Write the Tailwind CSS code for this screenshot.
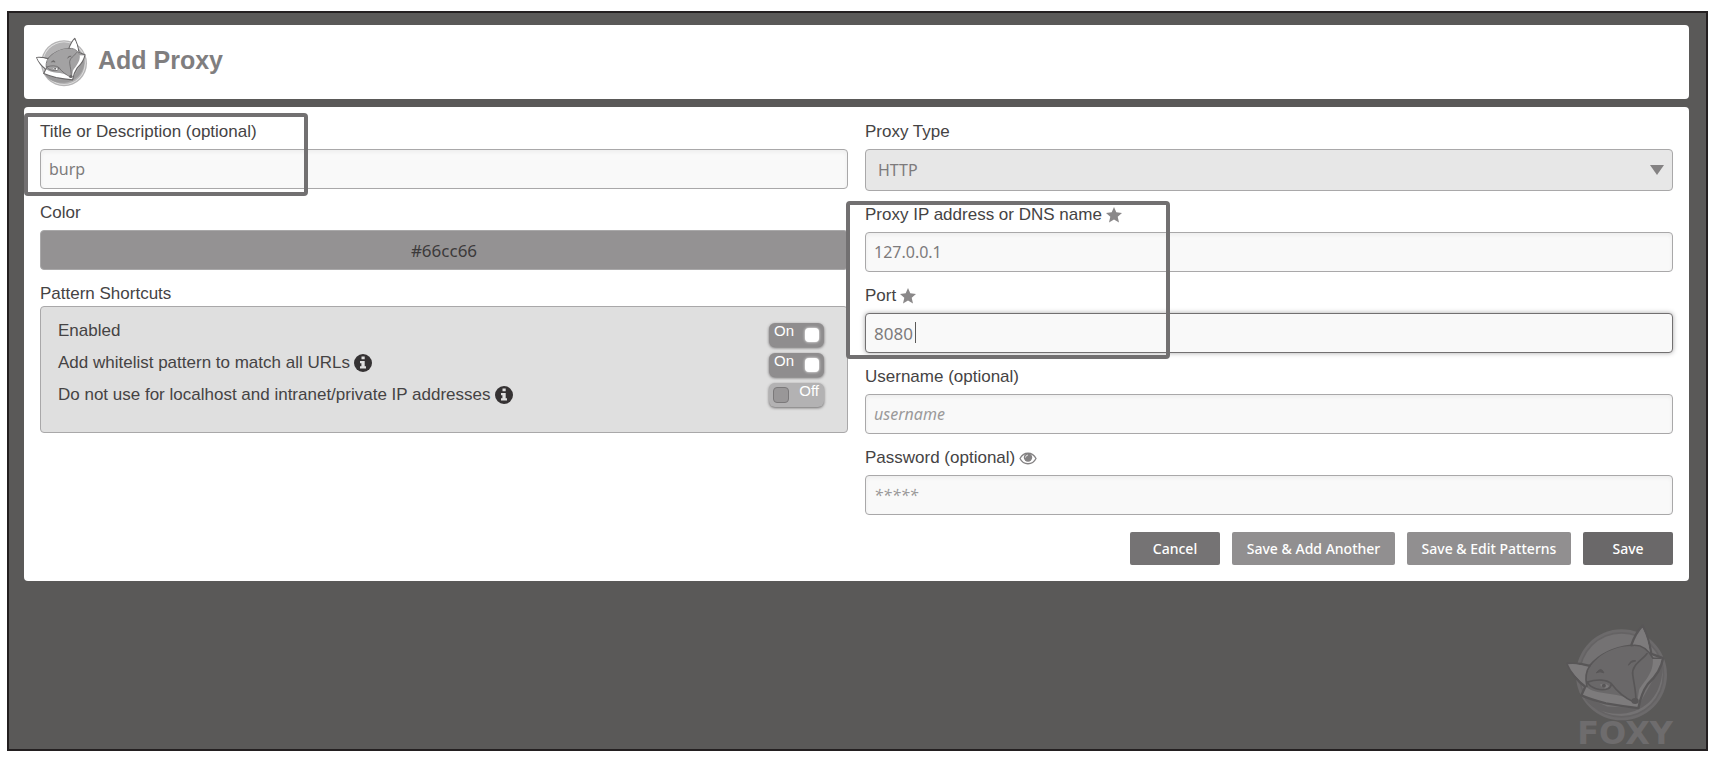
<!DOCTYPE html>
<html lang="en">
<head>
    <meta charset="UTF-8">
    <meta name="viewport" content="width=device-width, initial-scale=1.0">
    <title>Add Proxy</title>
    <script src="https://cdn.jsdelivr.net/npm/@tailwindcss/browser@4"></script>
</head>
<body class="flex flex-col min-h-screen bg-white px-[7px] pt-[11px] pb-2 font-['Liberation_Sans',sans-serif] text-[17px] text-[#454344]">
    <!-- Shared fox logo, coloured through custom properties -->
    <svg class="hidden">
        <symbol id="fox" viewBox="76 48 310 290">
            <circle cx="243" cy="200" r="137" fill="var(--ring)"></circle>
            <circle cx="243" cy="200" r="129" fill="var(--rim)"></circle>
            <circle cx="243" cy="200" r="124" fill="var(--disc)"></circle>
            <path d="M128 264 C160 330 300 345 350 250 C372 205 366 170 360 150 L352 190 L290 300 L200 295 Z" fill="var(--shade)"></path>
            <path d="M80 166 Q115 164 148 173 Q190 122 272 112 Q286 72 307 52 Q326 92 333 137 L368 150 Q362 190 322 228 Q302 256 294 300 Q240 294 196 286 Q150 274 122 262 L134 236 Q98 210 80 166 Z" fill="var(--white)" stroke="var(--line)" stroke-width="7" stroke-linejoin="round"></path>
            <path d="M138 208 C142 160 205 112 275 113 Q312 110 337 150 C342 195 308 222 296 245 L290 284 L272 277 C235 250 160 262 138 236 Z" fill="var(--fur)"></path>
            <path d="M284 112 Q290 80 306 58 Q324 92 328 134 Q308 112 284 112 Z" fill="var(--white)"></path>
            <path d="M82 168 Q112 164 138 178 Q130 205 136 230 Q96 202 82 168 Z" fill="var(--white)"></path>
            <path d="M140 222 C170 212 198 214 212 226 C230 250 258 272 280 282 M140 222 C150 240 180 250 202 242 Q212 238 212 226 M320 136 C308 154 272 170 277 200 C280 226 288 252 286 280 M148 173 Q130 198 139 235 M272 112 Q312 105 338 150 L360 150" fill="none" stroke="var(--line)" stroke-width="5" stroke-linecap="round"></path>
            <path d="M167 194 Q182 174 190 194 Q178 188 167 194 Z M264 171 Q270 154 286 158 Q272 160 264 171 Z" fill="var(--line)" stroke="var(--line)" stroke-width="3"></path>
            <path d="M178 230 Q192 222 206 234 Q194 250 178 230 Z" fill="var(--white)"></path>
            <circle cx="190" cy="233" r="6" fill="var(--line)"></circle>
            <ellipse cx="284" cy="279" rx="11" ry="9" fill="var(--line)"></ellipse>
        </symbol>
    </svg>

    <main class="flex-1 flex flex-col border-2 border-[#231f20] bg-[#5a5958] pl-[15px] pr-[17px] pt-3">
        <header class="flex items-center gap-[10px] h-[74px] bg-white rounded px-3">
            <svg class="w-[52px] h-[50px] [--ring:#b5b4b5] [--rim:#e4e4e4] [--line:#6a6869] [--disc:#b4b3b4] [--shade:#9b9a9b] [--white:#ffffff] [--fur:#a3a2a3]"><use href="#fox"></use></svg>
            <h1 class="text-[25px] font-bold text-[#807e7f] pb-[2px]">Add Proxy</h1>
        </header>

        <form class="mt-2 bg-white rounded px-4 pt-[13px] pb-4">
            <div class="grid grid-cols-2 gap-[17px]">
                <!-- Left column -->
                <div class="flex flex-col gap-3">
                    <div class="relative">
                        <label for="title" class="block leading-6 mb-[5px]">Title or Description (optional)</label>
                        <input type="text" id="title" value="burp" class="block w-full h-10 px-2 rounded border border-[#a9a8a9] bg-[#f9f9f9] inset-shadow-sm font-['Noto_Sans',sans-serif] text-base text-[#7d7b7c] focus:outline-none">
                        <div class="absolute -left-4 -top-[7px] w-[284px] h-[83px] border-4 border-[#727071] rounded pointer-events-none"></div>
                    </div>
                    <div>
                        <label for="color" class="block leading-6 mb-[5px]">Color</label>
                        <input type="text" id="color" value="#66cc66" class="block w-full h-10 px-2 rounded border border-[#a9a8a9] bg-[#949293] text-center font-['Noto_Sans',sans-serif] text-[17px] text-[#3c3a3b]">
                    </div>
                    <div>
                        <h2 class="leading-6">Pattern Shortcuts</h2>
                        <div class="flex justify-between h-[127px] rounded border border-[#a9a8a9] bg-[#dfdfdf] pl-[17px] pr-[23px]">
                            <div class="flex flex-col pt-2">
                                <label for="enabled" class="leading-8">Enabled</label>
                                <label for="whitelist" class="flex items-center gap-1 leading-8">
                                    Add whitelist pattern to match all URLs
                                    <svg class="w-[18px] h-[18px]" viewBox="0 0 18 18"><circle cx="9" cy="9" r="9" fill="#353233"></circle><path d="M7.5 2.5h3.2v2.8H7.5zM6 7h4.7v5.2H12v2.3H6v-2.3h1.4V9.2H6z" fill="#dfdfdf"></path></svg>
                                </label>
                                <label for="blacklist" class="flex items-center gap-1 leading-8">
                                    Do not use for localhost and intranet/private IP addresses
                                    <svg class="w-[18px] h-[18px]" viewBox="0 0 18 18"><circle cx="9" cy="9" r="9" fill="#353233"></circle><path d="M7.5 2.5h3.2v2.8H7.5zM6 7h4.7v5.2H12v2.3H6v-2.3h1.4V9.2H6z" fill="#dfdfdf"></path></svg>
                                </label>
                            </div>
                            <div class="flex flex-col gap-[6px] pt-4 text-[15px] leading-4 text-white">
                                <div class="relative h-6">
                                    <input type="checkbox" id="enabled" checked class="block appearance-none w-[55px] h-6 rounded-md bg-[#b3b2b3] checked:bg-[#8f8d8e] shadow-[0_1px_3px_#6b696a]">
                                    <span class="absolute left-[5px] top-0 pointer-events-none">On</span>
                                    <span class="absolute right-[5px] top-[5px] size-[14px] rounded bg-white shadow-[0_0_3px_#ffffff] pointer-events-none"></span>
                                </div>
                                <div class="relative h-6">
                                    <input type="checkbox" id="whitelist" checked class="block appearance-none w-[55px] h-6 rounded-md bg-[#b3b2b3] checked:bg-[#8f8d8e] shadow-[0_1px_3px_#6b696a]">
                                    <span class="absolute left-[5px] top-0 pointer-events-none">On</span>
                                    <span class="absolute right-[5px] top-[5px] size-[14px] rounded bg-white shadow-[0_0_3px_#ffffff] pointer-events-none"></span>
                                </div>
                                <div class="relative h-6">
                                    <input type="checkbox" id="blacklist" class="block appearance-none w-[55px] h-6 rounded-md bg-[#b3b2b3] checked:bg-[#8f8d8e] shadow-[0_1px_3px_#6b696a]">
                                    <span class="absolute right-[5px] top-0 pointer-events-none">Off</span>
                                    <span class="absolute left-1 top-1 size-4 rounded border border-[#7b797a] bg-[#999798] pointer-events-none"></span>
                                </div>
                            </div>
                        </div>
                    </div>
                </div>

                <!-- Right column -->
                <div class="flex flex-col gap-3">
                    <div>
                        <label for="type" class="block leading-6 mb-[5px]">Proxy Type</label>
                        <div class="relative">
                            <select id="type" class="block appearance-none w-full h-[42px] px-3 rounded border border-[#a9a8a9] bg-[#e7e7e7] font-['Noto_Sans',sans-serif] text-base text-[#7d7b7c]">
                                <option>HTTP</option>
                            </select>
                            <svg class="absolute right-[9px] top-4 w-[14px] h-[10px] pointer-events-none" viewBox="0 0 14 10"><path d="M0 0h14L7 10z" fill="#848283"></path></svg>
                        </div>
                    </div>
                    <div class="relative flex flex-col gap-3">
                        <div>
                            <label for="address" class="flex items-center gap-1 leading-6 mb-[5px]">
                                Proxy IP address or DNS name
                                <svg class="w-4 h-4" viewBox="0 0 16 16"><path d="M8 0l2.3 5.3 5.7.6-4.3 3.8 1.3 5.8L8 12.5 3 15.5l1.3-5.8L0 5.9l5.7-.6z" fill="#8a8889"></path></svg>
                            </label>
                            <input type="text" id="address" value="127.0.0.1" class="block w-full h-10 px-2 rounded border border-[#a9a8a9] bg-[#f9f9f9] inset-shadow-sm font-['Noto_Sans',sans-serif] text-base text-[#7d7b7c] focus:outline-none">
                        </div>
                        <div>
                            <label for="port" class="flex items-center gap-1 leading-6 mb-[5px]">
                                Port
                                <svg class="w-4 h-4" viewBox="0 0 16 16"><path d="M8 0l2.3 5.3 5.7.6-4.3 3.8 1.3 5.8L8 12.5 3 15.5l1.3-5.8L0 5.9l5.7-.6z" fill="#8a8889"></path></svg>
                            </label>
                            <div class="relative">
                                <input type="text" id="port" value="8080" class="block w-full h-10 px-2 rounded border border-[#727071] bg-[#f9f9f9] shadow-[0_0_5px_#a9a8a9] font-['Noto_Sans',sans-serif] text-[17px] text-[#7d7b7c] focus:outline-none">
                                <span class="absolute left-[50px] top-[9px] w-px h-[21px] bg-[#5a5958]"></span>
                            </div>
                        </div>
                        <div class="absolute -left-[19px] -top-[2px] w-[324px] h-[158px] border-4 border-[#727071] rounded pointer-events-none"></div>
                    </div>
                    <div>
                        <label for="username" class="block leading-6 mb-[5px]">Username (optional)</label>
                        <input type="text" id="username" placeholder="username" class="block w-full h-10 px-2 rounded border border-[#a9a8a9] bg-[#f9f9f9] inset-shadow-sm font-['Noto_Sans',sans-serif] text-base placeholder:italic placeholder:text-[#9b999a]">
                    </div>
                    <div>
                        <label for="password" class="flex items-center gap-1 leading-6 mb-[5px]">
                            Password (optional)
                            <svg class="w-[18px] h-[13px]" viewBox="0 0 18 13"><path d="M1 6.5C4.5-.5 13.5-.5 17 6.5 13.5 13.5 4.5 13.5 1 6.5z" fill="#ffffff" stroke="#848283" stroke-width="1.3"></path><circle cx="9" cy="5.5" r="4.2" fill="#848283"></circle><path d="M6.5 5.5Q6.7 3.2 9 3" fill="none" stroke="#ffffff" stroke-width=".8"></path></svg>
                        </label>
                        <input type="password" id="password" placeholder="*****" class="block w-full h-10 px-2 rounded border border-[#a9a8a9] bg-[#f9f9f9] inset-shadow-sm font-['Noto_Sans',sans-serif] text-base placeholder:italic placeholder:text-[#9b999a]">
                    </div>
                </div>
            </div>

            <div class="flex justify-end gap-3 mt-[17px] font-['Noto_Sans',sans-serif] text-sm font-medium text-white">
                <button type="button" class="w-[90px] h-[33px] rounded-xs bg-[#757374]">Cancel</button>
                <button type="button" class="w-[163px] h-[33px] rounded-xs bg-[#918f90]">Save &amp; Add Another</button>
                <button type="button" class="w-[164px] h-[33px] rounded-xs bg-[#918f90]">Save &amp; Edit Patterns</button>
                <button type="submit" class="w-[90px] h-[33px] rounded-xs bg-[#6a6869]">Save</button>
            </div>
        </form>

        <!-- Watermark -->
        <div class="mt-auto ml-auto mr-4 flex flex-col items-end text-[#6e6c6d]">
            <svg class="w-[103px] h-[97px] mr-1 [--ring:#6c6a6b] [--rim:#656364] [--line:#585657] [--disc:#747273] [--shade:#646263] [--white:#7d7b7c] [--fur:#6a6869]"><use href="#fox"></use></svg>
            <p class="-mt-1 font-['DejaVu_Sans',sans-serif] font-bold text-[32px] leading-8">FOXY</p>
        </div>
    </main>
</body>
</html>
